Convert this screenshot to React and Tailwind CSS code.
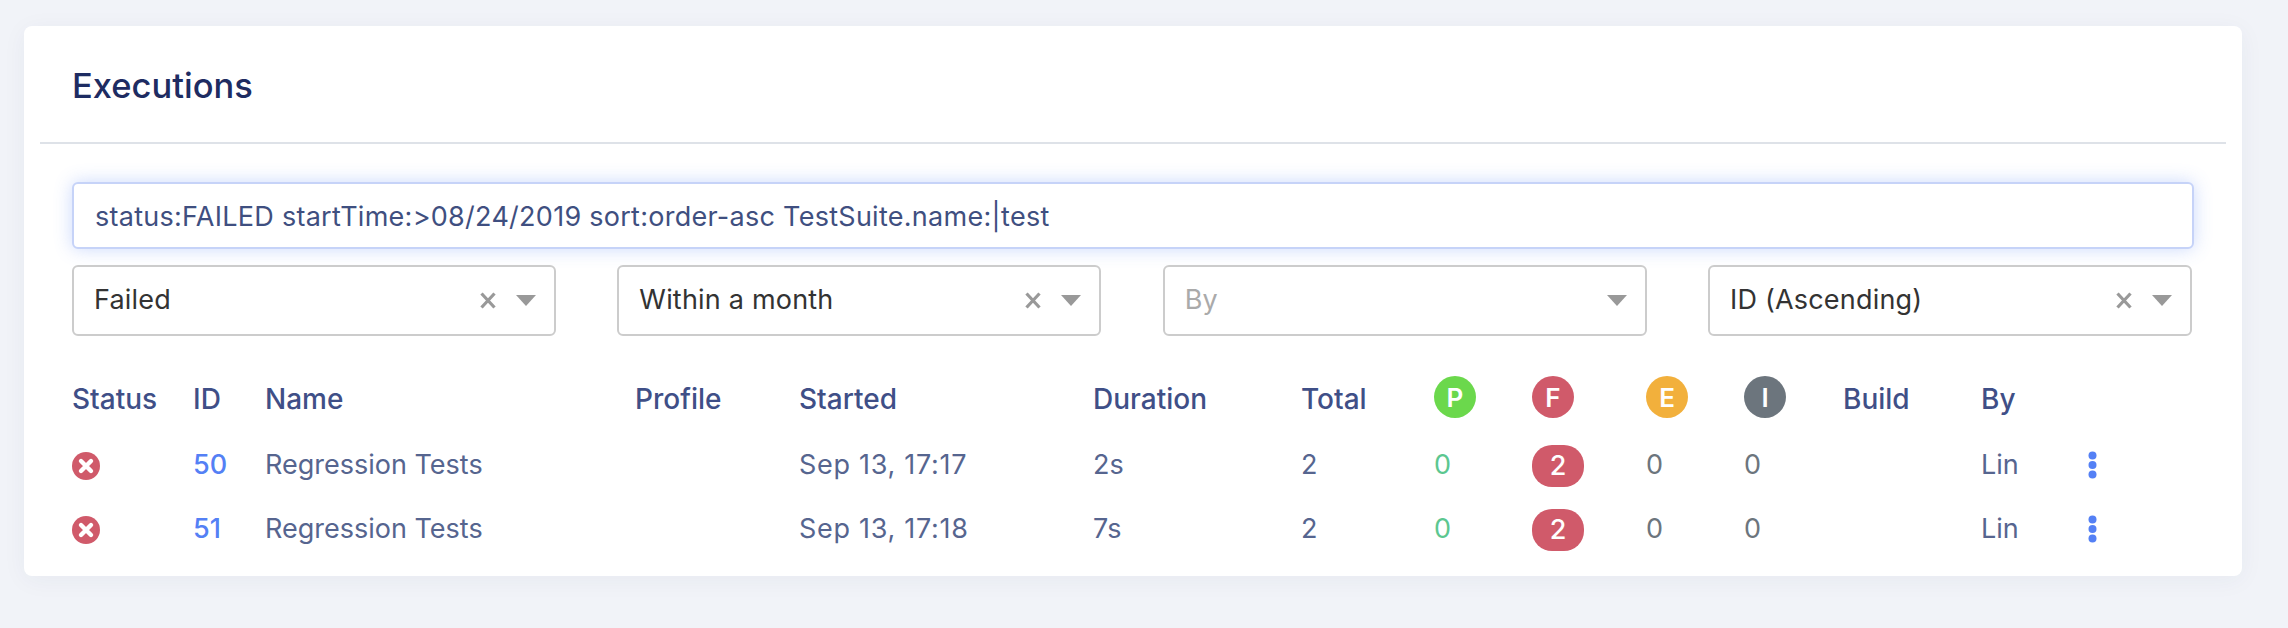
import React from 'react';

const ROWS = [
  { id: 50, started: 'Sep 13, 17:17', duration: '2s' },
  { id: 51, started: 'Sep 13, 17:18', duration: '7s' },
];

function Caret() {
  return <span className="ml-5 h-0 w-0 border-x-[10px] border-t-[11px] border-x-transparent border-t-[#999999]" />;
}

function ClearIcon() {
  return (
    <svg width="16" height="17" viewBox="0 0 16 17" className="text-[#999999]">
      <path d="M1.5 1.5 L14.5 15.5 M14.5 1.5 L1.5 15.5" stroke="currentColor" strokeWidth="3.2" fill="none" />
    </svg>
  );
}

function Select({ value, placeholder }) {
  return (
    <div className="flex h-[71px] w-[484px] items-center rounded-[6px] border-2 border-[#cccccc] bg-white pl-5 pr-[18px] text-[27px] tracking-[0.2px]">
      <span className={`flex-1 ${value ? 'text-[#333333]' : 'text-[#aaaaaa]'}`}>{value || placeholder}</span>
      {value && <ClearIcon />}
      <Caret />
    </div>
  );
}

function Dot({ letter, color }) {
  return (
    <span className={`flex h-[42px] w-[42px] items-center justify-center rounded-full text-[26px] font-semibold text-white ${color}`}>
      {letter}
    </span>
  );
}

function FailedIcon() {
  return (
    <svg width="28" height="28" viewBox="0 0 28 28">
      <circle cx="14" cy="14" r="14" fill="#d05a6a" />
      <path d="M9 9 L19 19 M19 9 L9 19" stroke="#ffffff" strokeWidth="4.4" strokeLinecap="round" />
    </svg>
  );
}

function Kebab() {
  return (
    <svg width="9" height="28" viewBox="0 0 9 28">
      <circle cx="4.5" cy="4.5" r="4" fill="#5480f5" />
      <circle cx="4.5" cy="14" r="4" fill="#5480f5" />
      <circle cx="4.5" cy="23.5" r="4" fill="#5480f5" />
    </svg>
  );
}

export default function App() {
  return (
    <div className="h-[628px] overflow-hidden bg-[#f1f3f8] pt-[26px] pl-6 pr-[46px] font-['Inter',sans-serif]">
      <div className="h-[550px] rounded-[8px] bg-white px-4 shadow-[0_4px_24px_rgba(40,50,90,0.05)]">
        {/* Header */}
        <div className="flex h-[118px] items-center border-b-2 border-[#dee2e8] pl-8 pt-[3px]">
          <h4 className="text-[34.5px] font-medium text-[#1e2c62]">Executions</h4>
        </div>

        <div className="pl-8 pr-8">
          {/* Search */}
          <div className="mt-[38px] flex h-[67px] items-center rounded-[6px] border-2 border-[#c6d3f8] bg-white pl-[21px] pt-[3px] text-[27px] tracking-[0.27px] text-[#3f4f80] shadow-[0_0_18px_rgba(84,128,245,0.3)]">
            status:FAILED startTime:&gt;08/24/2019 sort:order-asc TestSuite.name:|test
          </div>

          {/* Filters */}
          <div className="mt-4 flex justify-between pr-[2px]">
            <Select value="Failed" />
            <Select value="Within a month" />
            <Select placeholder="By" />
            <Select value="ID (Ascending)" />
          </div>

          {/* Executions table */}
          <table className="mt-[25px] w-full table-fixed border-collapse text-left text-[27px] text-[#56658f]">
            <colgroup>
              <col className="w-[121px]" />
              <col className="w-[72px]" />
              <col className="w-[370px]" />
              <col className="w-[164px]" />
              <col className="w-[294px]" />
              <col className="w-[208px]" />
              <col className="w-[133px]" />
              <col className="w-[98px]" />
              <col className="w-[114px]" />
              <col className="w-[98px]" />
              <col className="w-[99px]" />
              <col className="w-[138px]" />
              <col />
            </colgroup>
            <thead className="text-[28px] text-[#3f4f87]">
              <tr className="h-[72px]">
                <th className="pt-[3px] font-medium">Status</th>
                <th className="pt-[3px] font-medium">ID</th>
                <th className="pt-[3px] font-medium">Name</th>
                <th className="pt-[3px] font-medium">Profile</th>
                <th className="pt-[3px] font-medium">Started</th>
                <th className="pt-[3px] font-medium">Duration</th>
                <th className="pt-[3px] font-medium">Total</th>
                <th><Dot letter="P" color="bg-[#6bd84c]" /></th>
                <th><Dot letter="F" color="bg-[#d05a6a]" /></th>
                <th><Dot letter="E" color="bg-[#f2b03c]" /></th>
                <th><Dot letter="I" color="bg-[#6c757d]" /></th>
                <th className="pt-[3px] font-medium">Build</th>
                <th className="pt-[3px] font-medium">By</th>
              </tr>
            </thead>
            <tbody>
              {ROWS.map((row) => (
                <tr key={row.id} className="h-16">
                  <td className="pt-[2px]"><FailedIcon /></td>
                  <td className="font-medium text-[#5480f5]">{row.id}</td>
                  <td>Regression Tests</td>
                  <td></td>
                  <td className="tracking-[0.7px]">{row.started}</td>
                  <td>{row.duration}</td>
                  <td>2</td>
                  <td className="text-[#5cc790]">0</td>
                  <td className="pt-[2px]">
                    <span className="flex h-[42px] w-[52px] items-center justify-center rounded-[20px] bg-[#d05a6a] font-medium text-white">2</span>
                  </td>
                  <td className="text-[#6c757d]">0</td>
                  <td className="text-[#6c757d]">0</td>
                  <td></td>
                  <td>
                    <div className="flex items-center">
                      <span className="w-[107px]">Lin</span>
                      <Kebab />
                    </div>
                  </td>
                </tr>
              ))}
            </tbody>
          </table>
        </div>
      </div>
    </div>
  );
}
